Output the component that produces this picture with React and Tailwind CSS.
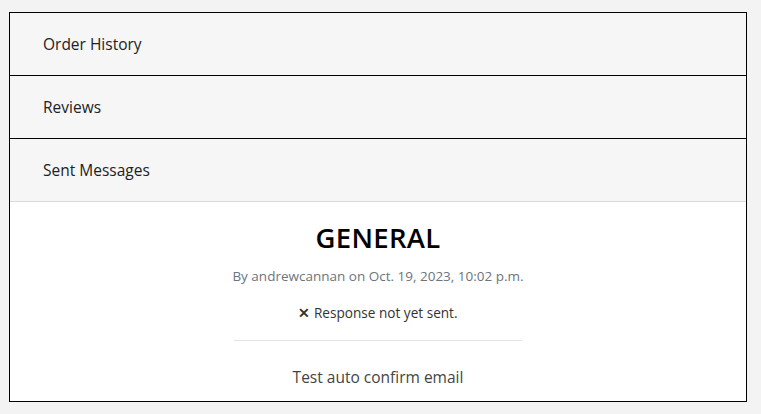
import React from "react";

const tabs = ["Order History", "Reviews", "Sent Messages"];

export default function App() {
  return (
    <div
      className="min-h-screen bg-[#f3f3f3] pt-3 pl-[9px]"
      style={{ fontFamily: '"Open Sans", sans-serif' }}
    >
      <div className="w-[738px] border border-black bg-white">
        {tabs.map((t, i) => (
          <div
            key={t}
            className={
              "flex h-[63px] items-center bg-[#f6f6f6] pl-[33px] pt-[2px] text-[15.5px] text-[#222] border-b " +
              (i < 2 ? "border-black" : "border-[#d9d9d9]")
            }
          >
            {t}
          </div>
        ))}
        {/* message card */}
        <div className="flex h-[199px] flex-col items-center pt-[18px]">
          <h2 className="text-[27.5px] font-semibold leading-[36px] text-black tracking-[0.3px]">GENERAL</h2>
          <p className="mt-[10px] text-[13.5px] text-[#6c757d]">
            By andrewcannan on Oct. 19, 2023, 10:02 p.m.
          </p>
          <p className="mt-[17px] text-[13.6px] text-[#333]">
            <span className="font-bold">✕</span> Response not yet sent.
          </p>
          <hr className="mt-[16px] w-[288px] border-t border-[#e5e5e5]" />
          <p className="mt-[25px] text-[15.5px] text-[#444]">Test auto confirm email</p>
        </div>
      </div>
    </div>
  );
}
